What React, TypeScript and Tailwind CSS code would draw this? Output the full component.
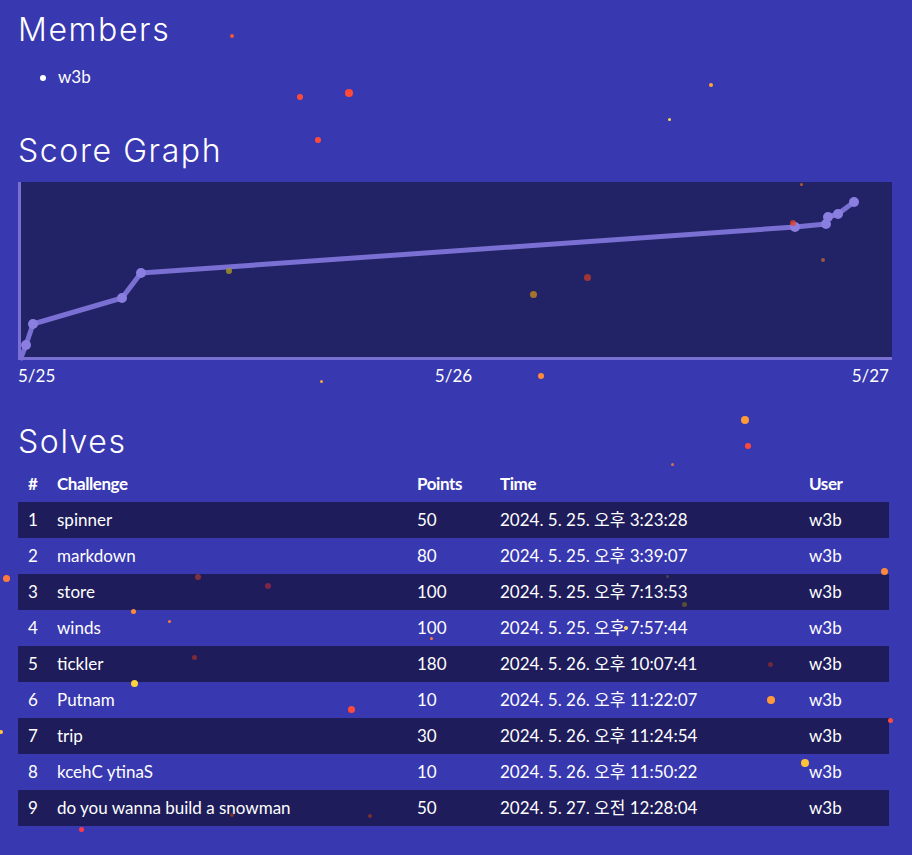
const solves = [
  { n: 1, name: 'spinner', points: 50, time: '2024. 5. 25. 오후 3:23:28' },
  { n: 2, name: 'markdown', points: 80, time: '2024. 5. 25. 오후 3:39:07' },
  { n: 3, name: 'store', points: 100, time: '2024. 5. 25. 오후 7:13:53' },
  { n: 4, name: 'winds', points: 100, time: '2024. 5. 25. 오후 7:57:44' },
  { n: 5, name: 'tickler', points: 180, time: '2024. 5. 26. 오후 10:07:41' },
  { n: 6, name: 'Putnam', points: 10, time: '2024. 5. 26. 오후 11:22:07' },
  { n: 7, name: 'trip', points: 30, time: '2024. 5. 26. 오후 11:24:54' },
  { n: 8, name: 'kcehC ytinaS', points: 10, time: '2024. 5. 26. 오후 11:50:22' },
  { n: 9, name: 'do you wanna build a snowman', points: 50, time: '2024. 5. 27. 오전 12:28:04' },
];

// graph points, in chart pixel coords (874 x 178)
const pts: [number, number][] = [
  [2, 178], [8, 163], [15, 142], [104, 116], [123, 91],
  [777, 45], [808, 42], [810, 35], [820, 32], [836, 20],
];

// confetti: x, y, radius, colour, opacity
const confetti: [number, number, number, string, number][] = [
  [232, 36, 2, '#f0583a', 1], [300, 97, 3, '#ff4a3a', 1], [349, 93, 4, '#ff4a3a', 1],
  [318, 140, 3, '#ff4a3a', 1], [711, 85, 2, '#ffa53a', 1], [669, 119, 1.5, '#ffd54a', 1],
  [801, 184, 1.5, '#d06a30', 0.8], [229, 271, 3, '#a99a20', 0.8], [533, 294, 3.5, '#c8881e', 0.8],
  [587, 277, 3.5, '#c0392b', 0.8], [823, 260, 2, '#d06a30', 0.7], [793, 223, 3, '#e0452e', 0.8],
  [321, 381, 1.5, '#ffa53a', 1], [541, 376, 3, '#ff8a3a', 1], [745, 420, 4, '#ff9a3a', 1],
  [748, 446, 3, '#ff4a3a', 1], [672, 464, 1.5, '#ff7a3a', 0.8], [6, 578, 3.5, '#ff7a3a', 1],
  [198, 577, 3, '#a83a30', 0.7], [268, 586, 3, '#a82a40', 0.7], [884, 571, 3.5, '#ff8a3a', 1],
  [684, 604, 2.5, '#6a5a2a', 0.8], [667, 576, 1.5, '#5a4a4a', 0.8], [133, 611, 2.5, '#ff8a3a', 1],
  [169, 621, 1.5, '#ff7a3a', 1], [431, 638, 1.5, '#ff7a3a', 1], [626, 628, 2, '#ffe06a', 1],
  [194, 657, 2.5, '#a8302a', 0.7], [770, 664, 2.5, '#a8302a', 0.6], [134, 683, 3.5, '#ffd43a', 1],
  [351, 709, 3.5, '#ff4a3a', 1], [771, 700, 4, '#ff9a3a', 1], [890, 720, 2.5, '#ff4a3a', 1],
  [1, 732, 2, '#ffc43a', 1], [805, 763, 4, '#ffc43a', 1], [81, 829, 2.5, '#ff3a4a', 1],
  [370, 816, 2, '#9a3a20', 0.7], [232, 815, 2, '#9a3a20', 0.7],
];

const head = { fontFamily: 'Inter, "DejaVu Sans", sans-serif' };
const body = { fontFamily: 'Lato, "Noto Sans", "Noto Sans CJK KR", sans-serif' };

const ScoreGraph = () => (
  <div className="relative h-[178px] w-[874px] bg-[#222266] border-l-[3px] border-b-[3px] border-[#7a6fd2]">
    <svg width="874" height="178" viewBox="0 0 874 178" className="absolute left-[-3px] top-0 overflow-visible">
      <polyline
        points={pts.map(([x, y]) => `${x},${y}`).join(' ')}
        fill="none"
        stroke="#7a6fd2"
        strokeWidth="5"
        strokeLinejoin="round"
      />
      {pts.slice(1).map(([x, y], i) => (
        <circle key={i} cx={x} cy={y} r="5" fill="#8a7fe0" />
      ))}
    </svg>
  </div>
);

export default function App() {
  return (
    <div className="relative min-h-[855px] w-full overflow-hidden bg-[#3838b0] px-[18px] pt-[10px] text-white" style={body}>
      <h2 className="text-[32px] font-light leading-[40px] tracking-wider" style={head}>Members</h2>
      <ul className="mt-[15px] list-disc pl-[40px] text-[17px] leading-[24px]">
        <li>w3b</li>
      </ul>

      <h2 className="mt-[42px] text-[32px] font-light leading-[40px] tracking-wider" style={head}>Score Graph</h2>
      <div className="mt-[11px]">
        <ScoreGraph />
        <div className="mt-[4px] flex w-[871px] justify-between text-[17px] leading-[24px]">
          <span>5/25</span>
          <span>5/26</span>
          <span>5/27</span>
        </div>
      </div>

      <h2 className="mt-[34px] text-[32px] font-light leading-[40px] tracking-wider" style={head}>Solves</h2>
      <table className="mt-[4px] w-[871px] table-fixed border-collapse text-[17px]">
        <colgroup>
          <col className="w-[39px]" />
          <col className="w-[360px]" />
          <col className="w-[83px]" />
          <col className="w-[309px]" />
          <col className="w-[80px]" />
        </colgroup>
        <thead>
          <tr className="h-[36px] text-left font-bold tracking-tight">
            <th className="pl-[10px]">#</th>
            <th>Challenge</th>
            <th>Points</th>
            <th>Time</th>
            <th>User</th>
          </tr>
        </thead>
        <tbody>
          {solves.map((s) => (
            <tr key={s.n} className={`h-[36px] ${s.n % 2 === 1 ? 'bg-[#1e1c5a]' : ''}`}>
              <td className="pl-[10px]">{s.n}</td>
              <td>{s.name}</td>
              <td>{s.points}</td>
              <td>{s.time}</td>
              <td>w3b</td>
            </tr>
          ))}
        </tbody>
      </table>

      {confetti.map(([x, y, r, c, o], i) => (
        <span
          key={i}
          className="pointer-events-none absolute rounded-full"
          style={{ left: x - r, top: y - r, width: r * 2, height: r * 2, background: c, opacity: o }}
        />
      ))}
    </div>
  );
}
